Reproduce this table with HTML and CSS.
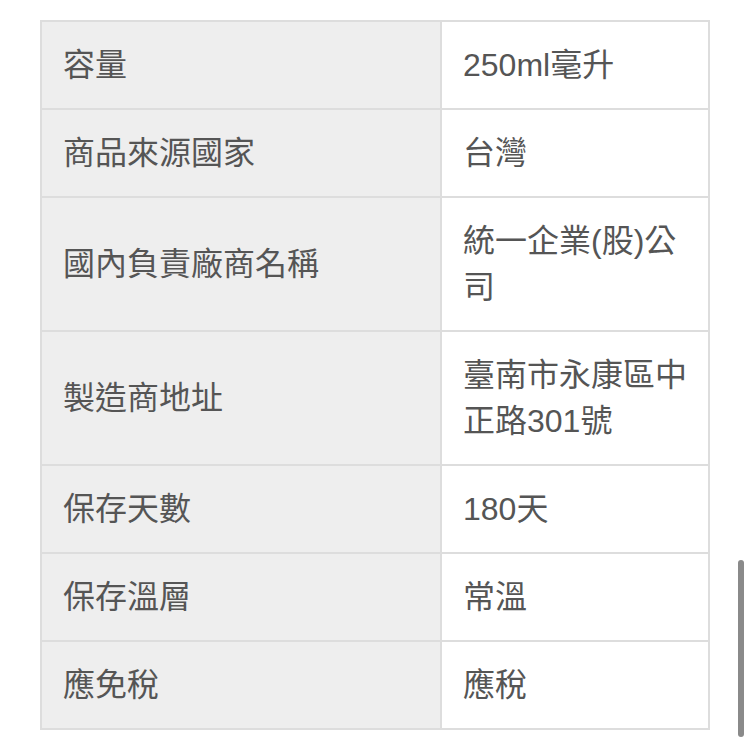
FILE: index.html
```html
<!DOCTYPE html>
<html lang="zh-Hant">
<head>
<meta charset="utf-8">
<title>商品規格</title>
<link rel="stylesheet" href="styles.css">
</head>
<body>
<table class="spec">
  <tbody>
    <tr><th class="label">容量</th><td class="value">250ml毫升</td></tr>
    <tr><th class="label">商品來源國家</th><td class="value">台灣</td></tr>
    <tr><th class="label">國內負責廠商名稱</th><td class="value">統一企業(股)公司</td></tr>
    <tr><th class="label">製造商地址</th><td class="value">臺南市永康區中正路301號</td></tr>
    <tr><th class="label">保存天數</th><td class="value">180天</td></tr>
    <tr><th class="label">保存溫層</th><td class="value">常溫</td></tr>
    <tr><th class="label">應免稅</th><td class="value">應稅</td></tr>
  </tbody>
</table>
<div class="scrollbar"></div>
</body>
</html>
```
FILE: styles.css
```css
html, body {
  margin: 0;
  padding: 0;
  background: #fff;
}
body {
  padding: 20px 0 0 40px;
  font-family: "Liberation Sans", "Noto Sans CJK TC", sans-serif;
  color: #555;
}
.spec {
  width: 670px;
  table-layout: fixed;
  border-collapse: separate;
  border-spacing: 0;
  border-top: 2px solid #dddddd;
  border-left: 2px solid #dddddd;
}
.label, .value {
  font-size: 32px;
  line-height: 46px;
  font-weight: 400;
  text-align: left;
  vertical-align: middle;
  padding: 20px 18px 20px 21px;
  border-right: 2px solid #dddddd;
  border-bottom: 2px solid #dddddd;
  word-break: break-all;
}
.label {
  width: 359px;
  background: #eeeeee;
}
.value {
  background: #ffffff;
}
.scrollbar {
  position: absolute;
  left: 738px;
  top: 560px;
  width: 6px;
  height: 177px;
  border-radius: 3px;
  background: #8a8a8a;
}
```
